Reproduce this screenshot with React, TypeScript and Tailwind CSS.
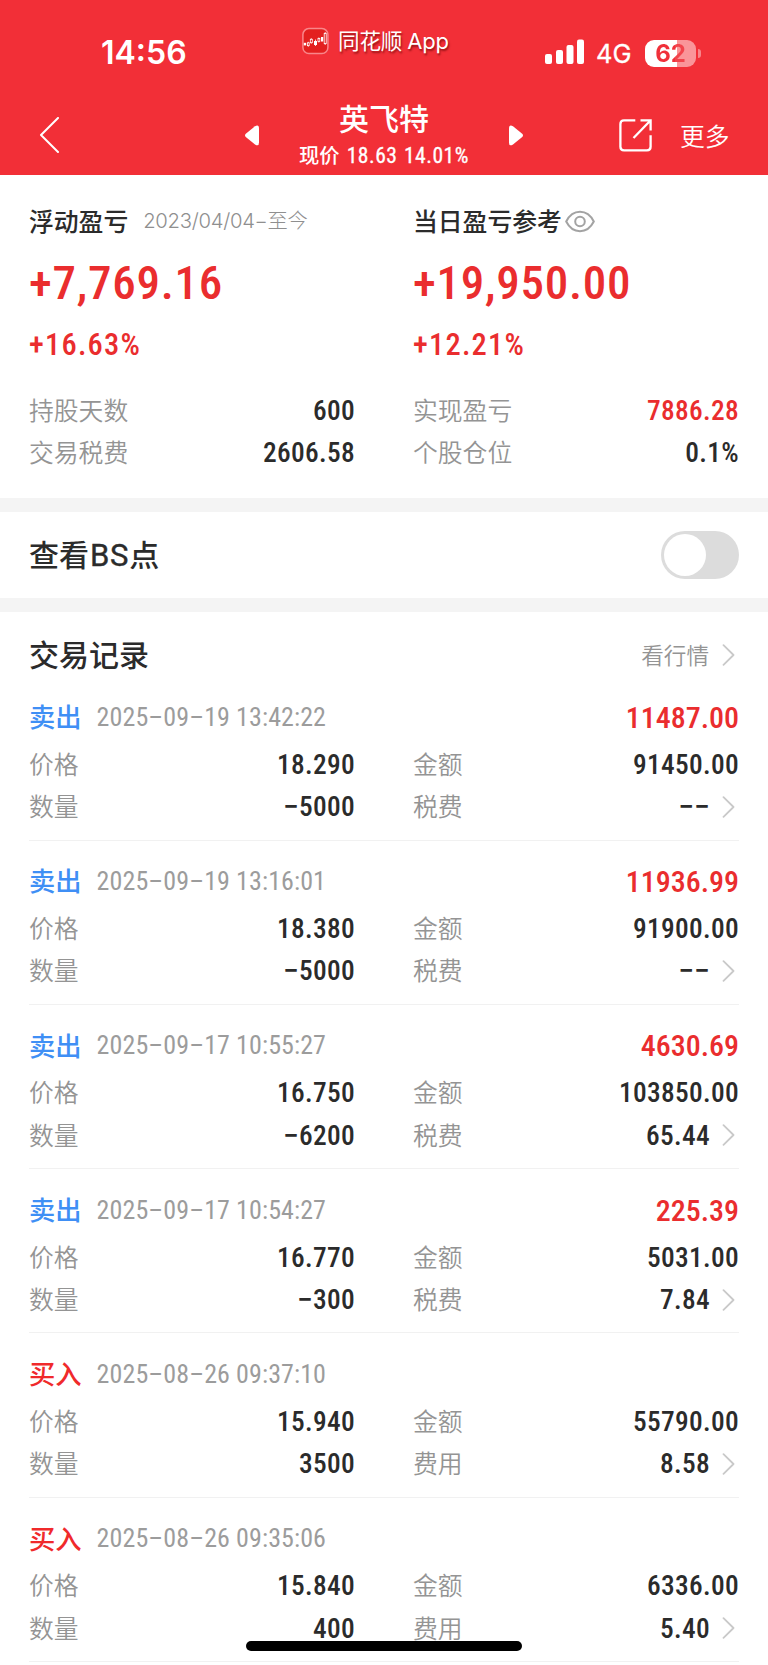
import { useState } from "react";

type Trade = {
  side: "买入" | "卖出";
  time: string;
  profit?: string;
  price: string;
  amount: string;
  quantity: string;
  feeLabel: string;
  fee: string;
};

const trades: Trade[] = [
  { side: "卖出", time: "2025−09−19 13:42:22", profit: "11487.00", price: "18.290", amount: "91450.00", quantity: "−5000", feeLabel: "税费", fee: "−−" },
  { side: "卖出", time: "2025−09−19 13:16:01", profit: "11936.99", price: "18.380", amount: "91900.00", quantity: "−5000", feeLabel: "税费", fee: "−−" },
  { side: "卖出", time: "2025−09−17 10:55:27", profit: "4630.69", price: "16.750", amount: "103850.00", quantity: "−6200", feeLabel: "税费", fee: "65.44" },
  { side: "卖出", time: "2025−09−17 10:54:27", profit: "225.39", price: "16.770", amount: "5031.00", quantity: "−300", feeLabel: "税费", fee: "7.84" },
  { side: "买入", time: "2025−08−26 09:37:10", price: "15.940", amount: "55790.00", quantity: "3500", feeLabel: "费用", fee: "8.58" },
  { side: "买入", time: "2025−08−26 09:35:06", price: "15.840", amount: "6336.00", quantity: "400", feeLabel: "费用", fee: "5.40" },
];

const labelBase =
  "pb-[2px] text-[24.8px] font-[350] text-[#949494]";
const valueBase =
  "pt-[2px] font-[Roboto,'Noto_Sans_CJK_SC',sans-serif] text-[27.4px] font-medium tracking-[0.3px] [font-stretch:75%]";

function ChevronRight() {
  return (
    <svg className="h-[22px] w-[13px] shrink-0" viewBox="0 0 13 22" fill="none" stroke="#c9c9c9" strokeWidth="1.8" strokeLinecap="round" strokeLinejoin="round">
      <path d="M1.5 1.2 11.5 11 1.5 20.8" />
    </svg>
  );
}

// dashes are set wider than the condensed digits
function Digits({ text }: { text: string }) {
  return text.split(/(−)/).map((part, i) =>
    part === "−" ? (
      <span key={i} className="[font-stretch:100%]">
        {part}
      </span>
    ) : (
      part
    ),
  );
}

function Field({
  label,
  value,
  color = "text-[#2b2b2b]",
  arrow = false,
}: {
  label: string;
  value: string;
  color?: string;
  arrow?: boolean;
}) {
  return (
    <div className="flex h-[42.3px] items-center justify-between">
      <span className={labelBase}>{label}</span>
      <span className="flex items-center">
        <span className={`${valueBase} ${color}`}>
          <Digits text={value} />
        </span>
        {arrow && (
          <span className="mr-[4px] ml-[12px] flex">
            <ChevronRight />
          </span>
        )}
      </span>
    </div>
  );
}

function StatusBar() {
  return (
    <div className="flex h-[90px] items-start text-white">
      <div className="w-[302px] shrink-0 pt-[33px] pl-[101px]">
        <span className="block font-[Inter,sans-serif] text-[32px] leading-[40px] font-semibold">14:56</span>
      </div>
      <div className="flex w-[242px] shrink-0 items-center pt-[26px]">
        <svg className="h-[28px] w-[27px]" viewBox="0 0 27 28">
          <rect x="0.9" y="1.6" width="25" height="25" rx="6" fill="#e3201f" stroke="#f9868a" strokeWidth="1.5" />
          <g fill="#fff">
            <rect x="1.8" y="15.8" width="2.4" height="2.6" />
            <rect x="12" y="14" width="3" height="4" />
            <rect x="19" y="10" width="2.2" height="4.5" />
          </g>
          <g fill="none" stroke="#fff" strokeWidth="0.8">
            <path d="M6.3 14.8v1m0 3v1m3-8.6v1m0 3.5v1M16.8 10.5v1m0 3v1M13.5 12.5v6.5M23.2 5v1.5m0 10v1.5" />
            <rect x="5.4" y="15.8" width="1.8" height="2.8" />
            <rect x="8.3" y="12.3" width="2" height="3.4" />
            <rect x="16" y="11.5" width="1.8" height="3" />
            <rect x="22.2" y="6.4" width="2" height="10.2" />
          </g>
        </svg>
        <span className="ml-[9px] text-[21.6px] leading-[28px] tracking-[-0.2px] [text-shadow:1px_2px_2px_rgba(90,0,0,0.6)]">
          同花顺<span className="ml-[5px] font-[Inter,sans-serif] text-[22px] tracking-[-0.2px]">App</span>
        </span>
      </div>
      <div className="flex pt-[38px]">
        <svg className="mt-[1px] h-[26px] w-[41px]" viewBox="0 0 41 26" fill="#fff">
          <rect x="1" y="15" width="7" height="10" rx="2" />
          <rect x="12" y="11" width="7" height="14" rx="2" />
          <rect x="22.5" y="6" width="7" height="19" rx="2" />
          <rect x="33" y="0.5" width="7" height="24.5" rx="2" />
        </svg>
        <span className="ml-[11px] w-[37px] font-[Inter,sans-serif] text-[25.5px] leading-[31px] [-webkit-text-stroke:0.3px_white]">4G</span>
        <span className="ml-[12px] flex items-center">
          <span className="flex h-[27px] w-[51px] items-center justify-center rounded-[9px] bg-[linear-gradient(90deg,#fff_63%,#fa9599_63%)] font-[Inter,sans-serif] text-[24px] font-bold">
            <span className="bg-[linear-gradient(90deg,#f0303a_65%,#f2444c_65%)] bg-clip-text text-transparent">62</span>
          </span>
          <span className="ml-[1.5px] h-[9px] w-[3.5px] rounded-r-full bg-[#f8858a]" />
        </span>
      </div>
    </div>
  );
}

function NavBar() {
  return (
    <div className="flex h-[84.5px] text-white">
      <div className="flex w-[244px] shrink-0 items-start pt-[27px] pl-[39px]">
        <svg className="h-[36px] w-[21px]" viewBox="0 0 21 36" fill="none" stroke="#fff" strokeWidth="2" strokeLinecap="round" strokeLinejoin="round">
          <path d="M19 1 2 18l17 17" />
        </svg>
      </div>
      <div className="flex w-[280px] shrink-0 justify-between">
        <svg className="mt-[35px] h-[21px] w-[16px]" viewBox="0 0 16 21" fill="#fff">
          <path d="M1.8 8.8 11 1.2Q15 -1 15 3.5v14Q15 22 11 19.4L1.8 12Q.2 10.4 1.8 8.8Z" />
        </svg>
        <div className="flex flex-col items-center whitespace-nowrap">
          <span className="mt-[6px] text-[30px] leading-[42px] font-medium">英飞特</span>
          <span className="mt-[1px] text-[20.3px] leading-[30px] font-medium">
            现价<span className="ml-[7px] font-[Roboto,sans-serif] text-[21.6px] font-normal tracking-[0.5px] [font-stretch:75%] [-webkit-text-stroke:0.3px_white] [word-spacing:1px]">18.63 14.01%</span>
          </span>
        </div>
        <svg className="mt-[35px] h-[21px] w-[16px]" viewBox="0 0 16 21" fill="#fff">
          <path d="M14.2 8.8 5 1.2Q1 -1 1 3.5v14Q1 22 5 19.4L14.2 12Q15.8 10.4 14.2 8.8Z" />
        </svg>
      </div>
      <div className="flex items-start pl-[94px]">
        <svg className="mt-[28px] h-[35px] w-[35px]" viewBox="0 0 35 35" fill="none" stroke="#fff" strokeWidth="2.3">
          <path d="M17.3 2.4H6Q2.4 2.4 2.4 6v22.8q0 3.6 3.6 3.6h23q3.6 0 3.6-3.6V17.3M22.5 2.4h10.1v10.2M32.2 2.8 15.5 20" />
        </svg>
        <span className="mt-[23.5px] ml-[27px] text-[24.8px] leading-[42px] font-[350]">更多</span>
      </div>
    </div>
  );
}

function EyeIcon() {
  return (
    <svg className="ml-[3px] h-[23px] w-[30px]" viewBox="0 0 30 23" fill="none" stroke="#a3a3a3" strokeWidth="2">
      <path d="M1.2 11.5C4.5 5 9.5 1.8 15 1.8s10.5 3.2 13.8 9.7C25.5 18 20.5 21.2 15 21.2S4.5 18 1.2 11.5Z" />
      <circle cx="15" cy="11.5" r="4.8" />
    </svg>
  );
}

function Summary() {
  const bigNumber =
    "h-[66px] font-[Roboto,sans-serif] text-[47px] leading-[66px] font-medium tracking-[0.75px] [font-stretch:75%] text-[#ea2d2e]";
  const percent =
    "h-[57px] font-[Roboto,sans-serif] text-[30.5px] leading-[57px] font-medium tracking-[1.2px] [font-stretch:75%] text-[#ea2d2e]";

  return (
    <section className="grid grid-cols-2 gap-x-[58px] bg-white px-[29px] pt-[26px] pb-[24px]">
      <div>
        <div className="flex h-[42px] items-center">
          <h2 className="pb-[2.5px] text-[24.8px] font-medium text-[#2b2b2b]">浮动盈亏</h2>
          <span className="ml-[15px] font-[Inter,'Noto_Sans_CJK_SC',sans-serif] text-[20.3px] font-light tracking-[-0.3px] whitespace-nowrap text-[#8f8f8f]">
            2023/04/04−至今
          </span>
        </div>
        <p className={`mt-[7px] ${bigNumber}`}>+7,769.16</p>
        <p className={percent}>+16.63%</p>
        <div className="mt-[17px]">
          <Field label="持股天数" value="600" />
          <Field label="交易税费" value="2606.58" />
        </div>
      </div>
      <div>
        <div className="flex h-[42px] items-center">
          <h2 className="pb-[2.5px] text-[24.8px] font-medium text-[#2b2b2b]">当日盈亏参考</h2>
          <EyeIcon />
        </div>
        <p className={`mt-[7px] ${bigNumber}`}>+19,950.00</p>
        <p className={percent}>+12.21%</p>
        <div className="mt-[17px]">
          <Field label="实现盈亏" value="7886.28" color="text-[#ea2d2e]" />
          <Field label="个股仓位" value="0.1%" />
        </div>
      </div>
    </section>
  );
}

function BsToggle() {
  const [on, setOn] = useState(false);

  return (
    <section className="flex h-[86px] shrink-0 items-center justify-between bg-white px-[29px]">
      <h2 className="text-[30px] font-medium text-[#2b2b2b]">
        查看<span className="ml-[1px] font-[Roboto,sans-serif] text-[31px] font-normal tracking-[0.7px] [-webkit-text-stroke:0.4px_#2b2b2b]">BS</span>点
      </h2>
      <button
        type="button"
        role="switch"
        aria-checked={on}
        aria-label="查看BS点"
        onClick={() => setOn(!on)}
        className={`flex h-[48px] w-[78px] items-center rounded-full px-[3px] ${on ? "justify-end bg-[#ea2d2e]" : "justify-start bg-[#dcdcdc]"}`}
      >
        <span className="h-[42px] w-[42px] rounded-full bg-white" />
      </button>
    </section>
  );
}

function TradeRow({ trade }: { trade: Trade }) {
  return (
    <li className="h-[164.3px] shrink-0 border-b border-[#f1f1f1] pt-[20px]">
      <div className="flex h-[42px] items-center">
        <span className={`pb-[3px] text-[26.3px] font-medium ${trade.side === "卖出" ? "text-[#3f8ff5]" : "text-[#f02a2b]"}`}>
          {trade.side}
        </span>
        <span className="ml-[15px] font-[Roboto,sans-serif] text-[26px] font-normal tracking-[0.1px] [font-stretch:75%] text-[#9c9c9c]">
          <Digits text={trade.time} />
        </span>
        <span className="ml-auto font-[Roboto,sans-serif] text-[30px] font-medium [font-stretch:75%] text-[#ea2d2e]">
          {trade.profit}
        </span>
      </div>
      <div className="mt-[5px] grid grid-cols-2 gap-x-[58px]">
        <Field label="价格" value={trade.price} />
        <Field label="金额" value={trade.amount} />
        <Field label="数量" value={trade.quantity} />
        <Field label={trade.feeLabel} value={trade.fee} arrow />
      </div>
    </li>
  );
}

export default function App() {
  return (
    <div className="relative flex h-[1665px] w-[768px] flex-col overflow-hidden bg-white font-['Noto_Sans_CJK_SC',sans-serif]">
      <header className="h-[174.5px] shrink-0 bg-[#f22f37]">
        <StatusBar />
        <NavBar />
      </header>
      <div className="h-[323.5px] shrink-0">
        <Summary />
      </div>
      <div className="h-[14px] shrink-0 bg-[#f4f4f4]" />
      <BsToggle />
      <div className="h-[14px] shrink-0 bg-[#f4f4f4]" />
      <section className="px-[29px]">
        <div className="flex h-[64.3px] items-end justify-between">
          <h2 className="pb-[2px] text-[30px] leading-[42px] font-medium text-[#2b2b2b]">交易记录</h2>
          <span className="flex h-[42px] items-center text-[22.6px] font-[350] text-[#949494]">
            <span className="pb-[1px]">看行情</span>
            <span className="mr-[4px] ml-[13px] flex">
              <ChevronRight />
            </span>
          </span>
        </div>
        <ul>
          {trades.map((t) => (
            <TradeRow key={t.time} trade={t} />
          ))}
        </ul>
      </section>
      <div className="absolute bottom-[14px] left-[246px] h-[10px] w-[276px] rounded-full bg-black" />
    </div>
  );
}
